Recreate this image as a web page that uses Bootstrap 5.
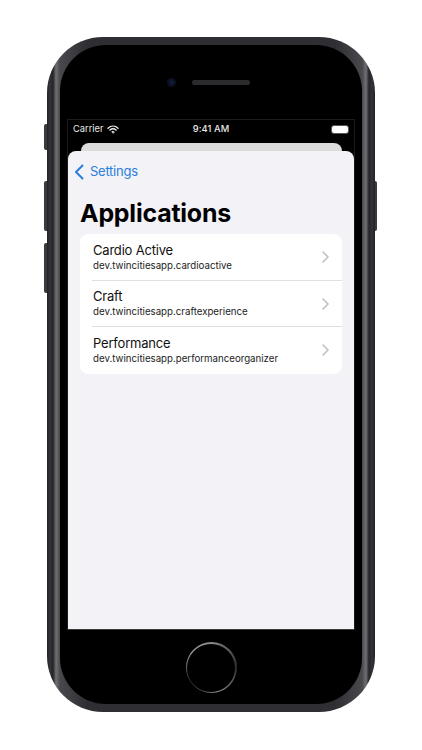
<!DOCTYPE html>
<html lang="en"><head><meta charset="utf-8"><title>Applications</title>
<link href="https://cdn.jsdelivr.net/npm/bootstrap@5.3.0/dist/css/bootstrap.min.css" rel="stylesheet">
<style>
html,body{margin:0;height:750px;overflow:hidden;background:#fff;font-family:Inter,"Liberation Sans",sans-serif}
.phone{position:relative;width:328px;height:675px;margin:37px 0 0 47px;border-radius:56px;padding:8px 13px;
 background:linear-gradient(90deg,#222226 0,#343439 3px,#242428 6px,#707074 9px,#48484d 13px,#2e2e33 40px,#2e2e33 calc(100% - 40px),#48484d calc(100% - 13px),#707074 calc(100% - 9px),#242428 calc(100% - 6px),#343439 calc(100% - 3px),#222226 100%)}
.hw{position:absolute;background:#39393e;width:3px}
.hw-a{left:-3px;top:87px;height:26px;border-radius:2px 0 0 2px}
.hw-b{left:-3px;top:144px;height:50px;border-radius:2px 0 0 2px}
.hw-c{left:-3px;top:206px;height:50px;border-radius:2px 0 0 2px}
.hw-d{right:-2px;width:2px;top:144px;height:50px;border-radius:0 2px 2px 0}
.face{height:659px;background:#000;border-radius:46px;padding-top:30px}
.sensors{height:14px;gap:16px;padding-right:6px}
.cam{width:9px;height:9px;border-radius:50%;background:#101a30;border:2px solid #0b1020}
.speaker{width:58px;height:5px;border-radius:3px;background:#2b2b2d}
.screen{margin:30px 7px 0 7px;height:511px;border:1px solid #1c1c1e;border-bottom-color:#3a3a3c;background:#000;position:relative}
.status{height:18px;color:#e8e8e8;font-size:9.3px;padding:0 5px 0 5px;position:relative}
.status-time{position:absolute;left:0;right:0;text-align:center;font-weight:500;letter-spacing:.1px}
.batt{width:18px;height:9px;border-radius:3px;background:#fff;border:1px solid #555}
.sheet-back{height:16px;margin:5px 12px 0 13px;background:#dcdcdc;border-radius:8px 8px 0 0}
.sheet{position:absolute;left:0;right:0;top:31px;bottom:0;background:#f2f2f7;border-radius:8px 8px 0 0;padding:0 12px 0 12px}
.backlink{height:42px;margin-left:-6px;gap:6px;color:#2b7fdc;font-size:13px;letter-spacing:-.25px;text-decoration:none}
.page-title{font-size:24.9px;font-weight:700;line-height:32px;margin:4px 0 5px;color:#000;letter-spacing:-.2px}
.apps{border-radius:8px;background:#fff}
.apps .list-group-item{height:46.5px;border:0;padding:0 13px 0 13px;background:transparent;position:relative}
.apps .list-group-item+.list-group-item::before{content:"";position:absolute;left:12px;right:0;top:-1px;border-top:1px solid #e0e0e3}
.app-name{font-size:13px;line-height:16px;color:#111;letter-spacing:-.2px}
.app-id{font-size:9.7px;line-height:15px;color:#222}
.home{width:51px;height:51px;border-radius:50%;margin:12px auto 0;padding:1.5px;background:conic-gradient(#8a8a8e,#2c2c2e 25%,#8a8a8e 45%,#2c2c2e 65%,#9a9a9e 85%,#8a8a8e)}
.home-in{width:100%;height:100%;border-radius:50%;background:#000}
</style></head>
<body>
<div class="phone">
 <div class="hw hw-a"></div><div class="hw hw-b"></div><div class="hw hw-c"></div><div class="hw hw-d"></div>
 <div class="face">
  <div class="sensors d-flex justify-content-center align-items-center"><span class="cam"></span><span class="speaker"></span></div>
  <div class="screen">
   <div class="status d-flex align-items-center justify-content-between">
    <span class="status-time">9:41 AM</span>
    <span class="d-flex align-items-center gap-1">Carrier
     <svg width="12" height="9" viewBox="0 0 12 9" fill="none" stroke="#eee" stroke-linecap="round"><path d="M1 3.2C4 .4 8 .4 11 3.2" stroke-width="1.4"/><path d="M2.9 5C4.8 3.4 7.2 3.4 9.1 5" stroke-width="1.4"/><path d="M6 8.2 4.7 6.8C5.5 6.2 6.5 6.2 7.3 6.8Z" fill="#eee" stroke-width=".5"/></svg></span>
    <span class="batt"></span>
   </div>
   <div class="sheet-back"></div>
   <div class="sheet">
    <a class="backlink d-flex align-items-center" href="#">
     <svg width="10" height="16" viewBox="0 0 10 16" fill="none" stroke="#2b7fdc" stroke-width="2" stroke-linecap="round" stroke-linejoin="round"><path d="M8.5 1.5 2 8l6.5 6.5"/></svg>Settings</a>
    <h1 class="page-title">Applications</h1>
    <div class="list-group apps">
     <div class="list-group-item d-flex align-items-center justify-content-between"><div><div class="app-name">Cardio Active</div><div class="app-id">dev.twincitiesapp.cardioactive</div></div>
      <svg width="7" height="12" viewBox="0 0 7 12" fill="none" stroke="#c0c0c4" stroke-width="1.6" stroke-linecap="round" stroke-linejoin="round"><path d="M1 1l5 5-5 5"/></svg></div>
     <div class="list-group-item d-flex align-items-center justify-content-between"><div><div class="app-name">Craft</div><div class="app-id">dev.twincitiesapp.craftexperience</div></div>
      <svg width="7" height="12" viewBox="0 0 7 12" fill="none" stroke="#c0c0c4" stroke-width="1.6" stroke-linecap="round" stroke-linejoin="round"><path d="M1 1l5 5-5 5"/></svg></div>
     <div class="list-group-item d-flex align-items-center justify-content-between"><div><div class="app-name">Performance</div><div class="app-id">dev.twincitiesapp.performanceorganizer</div></div>
      <svg width="7" height="12" viewBox="0 0 7 12" fill="none" stroke="#c0c0c4" stroke-width="1.6" stroke-linecap="round" stroke-linejoin="round"><path d="M1 1l5 5-5 5"/></svg></div>
    </div>
   </div>
  </div>
  <div class="home"><div class="home-in"></div></div>
 </div>
</div>
<script src="https://cdn.jsdelivr.net/npm/bootstrap@5.3.0/dist/js/bootstrap.bundle.min.js"></script>
</body></html>
